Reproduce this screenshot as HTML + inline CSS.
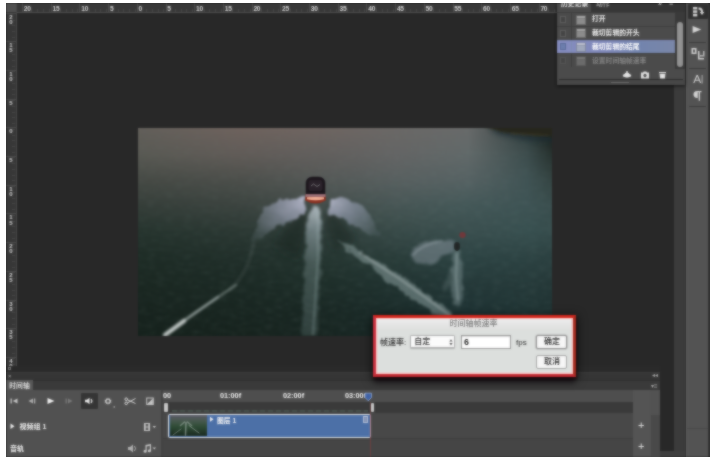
<!DOCTYPE html>
<html lang="zh-CN">
<head>
<meta charset="utf-8">
<title>时间轴帧速率</title>
<style>
*{box-sizing:border-box;margin:0;padding:0}
html,body{width:710px;height:459px;overflow:hidden;background:#fff}
body{position:relative;font-family:"Liberation Sans","Noto Sans CJK SC",sans-serif;font-size:8px;color:#ddd;line-height:1}
.a{position:absolute}
#clipper{left:0;top:0;width:710px;height:459px;overflow:hidden;clip-path:inset(3px 0 2px 6px)}
#app{left:-10px;top:-10px;width:740px;height:480px;background:#282828;filter:url(#soft)}
#in{left:10px;top:10px;width:710px;height:459px}
#rt{left:6px;top:3px;width:551px;height:10px;background:#373737 repeating-linear-gradient(90deg,transparent 0,transparent 4.74px,#474747 4.74px,#474747 5.74px) 15.3px 6px/600px 3px no-repeat;border-bottom:1px solid #4e4e4e}
#rl{left:6px;top:3px;width:10.5px;height:368px;background:#373737 repeating-linear-gradient(180deg,transparent 0,transparent 4.74px,#474747 4.74px,#474747 5.74px) 6px 12px/3px 400px no-repeat;border-right:1px solid #4a4a4a}
#rc{left:6px;top:3px;width:10px;height:9px;background:#4f4f4f}
.rn{font-size:6.6px;color:#d8d8d8;top:4.6px;height:7px;line-height:7px;white-space:nowrap;font-weight:700;letter-spacing:-.2px}
.rv{font-size:6px;color:#d8d8d8;left:7px;width:8px;line-height:5.3px;text-align:center;font-weight:700}
.tk{top:3px;width:1px;height:9px;background:#4c4c4c}
.tkv{left:6px;height:1px;width:10px;background:#4c4c4c}
#photo{left:138px;top:128px;width:414px;height:208px;overflow:hidden}
#photo svg{display:block}
</style>
</head>
<body>
<svg width="0" height="0" style="position:absolute"><defs><filter id="soft" x="0" y="0" width="100%" height="100%" color-interpolation-filters="sRGB"><feGaussianBlur stdDeviation="0.8" result="b"/><feComposite in="SourceGraphic" in2="b" operator="arithmetic" k1="0" k2="0.3" k3="0.7" k4="0"/></filter></defs></svg>
<div id="clipper" class="a"><div id="app" class="a"><div id="in" class="a">
<div id="rt" class="a"></div>
<div id="rl" class="a"></div>
<div id="rc" class="a"></div>
<div class="a tk" style="left:22.0px"></div><div class="a rn" style="left:23.8px">20</div>
<div class="a tk" style="left:50.7px"></div><div class="a rn" style="left:52.5px">15</div>
<div class="a tk" style="left:79.4px"></div><div class="a rn" style="left:81.2px">10</div>
<div class="a tk" style="left:108.1px"></div><div class="a rn" style="left:109.9px">5</div>
<div class="a tk" style="left:136.8px"></div><div class="a rn" style="left:138.6px">0</div>
<div class="a tk" style="left:165.5px"></div><div class="a rn" style="left:167.3px">5</div>
<div class="a tk" style="left:194.2px"></div><div class="a rn" style="left:196.0px">10</div>
<div class="a tk" style="left:222.9px"></div><div class="a rn" style="left:224.7px">15</div>
<div class="a tk" style="left:251.6px"></div><div class="a rn" style="left:253.4px">20</div>
<div class="a tk" style="left:280.3px"></div><div class="a rn" style="left:282.1px">25</div>
<div class="a tk" style="left:309.0px"></div><div class="a rn" style="left:310.8px">30</div>
<div class="a tk" style="left:337.7px"></div><div class="a rn" style="left:339.5px">35</div>
<div class="a tk" style="left:366.4px"></div><div class="a rn" style="left:368.2px">40</div>
<div class="a tk" style="left:395.1px"></div><div class="a rn" style="left:396.9px">45</div>
<div class="a tk" style="left:423.8px"></div><div class="a rn" style="left:425.6px">50</div>
<div class="a tk" style="left:452.5px"></div><div class="a rn" style="left:454.3px">55</div>
<div class="a tk" style="left:481.2px"></div><div class="a rn" style="left:483.0px">60</div>
<div class="a tk" style="left:509.9px"></div><div class="a rn" style="left:511.7px">65</div>
<div class="a tk" style="left:538.6px"></div><div class="a rn" style="left:540.4px">70</div>
<div class="a tkv" style="top:12.5px"></div><div class="a rv" style="top:14.5px">2<br>0</div>
<div class="a tkv" style="top:41.2px"></div><div class="a rv" style="top:43.2px">1<br>5</div>
<div class="a tkv" style="top:69.9px"></div><div class="a rv" style="top:71.9px">1<br>0</div>
<div class="a tkv" style="top:98.6px"></div><div class="a rv" style="top:100.6px">5</div>
<div class="a tkv" style="top:127.3px"></div><div class="a rv" style="top:129.3px">0</div>
<div class="a tkv" style="top:156.0px"></div><div class="a rv" style="top:158.0px">5</div>
<div class="a tkv" style="top:184.7px"></div><div class="a rv" style="top:186.7px">1<br>0</div>
<div class="a tkv" style="top:213.4px"></div><div class="a rv" style="top:215.4px">1<br>5</div>
<div class="a tkv" style="top:242.1px"></div><div class="a rv" style="top:244.1px">2<br>0</div>
<div class="a tkv" style="top:270.8px"></div><div class="a rv" style="top:272.8px">2<br>5</div>
<div class="a tkv" style="top:299.5px"></div><div class="a rv" style="top:301.5px">3<br>0</div>
<div class="a tkv" style="top:328.2px"></div><div class="a rv" style="top:330.2px">3<br>5</div>
<div class="a tkv" style="top:356.9px"></div><div class="a rv" style="top:358.9px">4<br>0</div>
<div id="photo" class="a"><svg width="414" height="208" viewBox="0 0 414 208">
<defs>
<linearGradient id="c0" x1="0" y1="0" x2="0" y2="208" gradientUnits="userSpaceOnUse"><stop offset="0.000" stop-color="#625f5a"/><stop offset="0.125" stop-color="#595a54"/><stop offset="0.250" stop-color="#464a45"/><stop offset="0.375" stop-color="#353e39"/><stop offset="0.500" stop-color="#26342e"/><stop offset="0.625" stop-color="#1e2c26"/><stop offset="0.750" stop-color="#1b2822"/><stop offset="0.875" stop-color="#18241f"/><stop offset="1.000" stop-color="#16221d"/></linearGradient>
<linearGradient id="c1" x1="0" y1="0" x2="0" y2="208" gradientUnits="userSpaceOnUse"><stop offset="0.000" stop-color="#6e625d"/><stop offset="0.125" stop-color="#615c58"/><stop offset="0.250" stop-color="#4c4f4b"/><stop offset="0.375" stop-color="#3b433f"/><stop offset="0.500" stop-color="#2b3833"/><stop offset="0.625" stop-color="#212f2a"/><stop offset="0.750" stop-color="#1c2a25"/><stop offset="0.875" stop-color="#192621"/><stop offset="1.000" stop-color="#17231e"/></linearGradient>
<linearGradient id="c2" x1="0" y1="0" x2="0" y2="208" gradientUnits="userSpaceOnUse"><stop offset="0.000" stop-color="#6f6561"/><stop offset="0.125" stop-color="#625f5d"/><stop offset="0.250" stop-color="#545856"/><stop offset="0.375" stop-color="#434d4a"/><stop offset="0.500" stop-color="#313f3b"/><stop offset="0.625" stop-color="#253530"/><stop offset="0.750" stop-color="#1e2e29"/><stop offset="0.875" stop-color="#1a2824"/><stop offset="1.000" stop-color="#182521"/></linearGradient>
<linearGradient id="c3" x1="0" y1="0" x2="0" y2="208" gradientUnits="userSpaceOnUse"><stop offset="0.000" stop-color="#6a6866"/><stop offset="0.125" stop-color="#646565"/><stop offset="0.250" stop-color="#586060"/><stop offset="0.375" stop-color="#475655"/><stop offset="0.500" stop-color="#384a48"/><stop offset="0.625" stop-color="#2a3d3a"/><stop offset="0.750" stop-color="#213331"/><stop offset="0.875" stop-color="#1c2d2b"/><stop offset="1.000" stop-color="#192927"/></linearGradient>
<linearGradient id="c4" x1="0" y1="0" x2="0" y2="208" gradientUnits="userSpaceOnUse"><stop offset="0.000" stop-color="#686a6a"/><stop offset="0.125" stop-color="#616969"/><stop offset="0.250" stop-color="#566263"/><stop offset="0.375" stop-color="#445858"/><stop offset="0.500" stop-color="#3a4e4e"/><stop offset="0.625" stop-color="#2d4343"/><stop offset="0.750" stop-color="#253939"/><stop offset="0.875" stop-color="#1f3334"/><stop offset="1.000" stop-color="#1c2e2f"/></linearGradient>
<linearGradient id="c5" x1="0" y1="0" x2="0" y2="208" gradientUnits="userSpaceOnUse"><stop offset="0.000" stop-color="#303c3c"/><stop offset="0.125" stop-color="#3c4c4c"/><stop offset="0.250" stop-color="#405354"/><stop offset="0.375" stop-color="#3e5354"/><stop offset="0.500" stop-color="#385050"/><stop offset="0.625" stop-color="#2d4343"/><stop offset="0.750" stop-color="#263a3a"/><stop offset="0.875" stop-color="#213535"/><stop offset="1.000" stop-color="#1e3131"/></linearGradient>
<linearGradient id="c6" x1="0" y1="0" x2="0" y2="208" gradientUnits="userSpaceOnUse"><stop offset="0.000" stop-color="#1a201c"/><stop offset="0.125" stop-color="#27322f"/><stop offset="0.250" stop-color="#344442"/><stop offset="0.375" stop-color="#3a4e4e"/><stop offset="0.500" stop-color="#364c4c"/><stop offset="0.625" stop-color="#2b4040"/><stop offset="0.750" stop-color="#253838"/><stop offset="0.875" stop-color="#203333"/><stop offset="1.000" stop-color="#1d2f2f"/></linearGradient>
<linearGradient id="r1" x1="0" y1="0" x2="100" y2="0" gradientUnits="userSpaceOnUse"><stop offset="0" stop-color="#000"/><stop offset="1" stop-color="#fff"/></linearGradient><mask id="m1" maskUnits="userSpaceOnUse" x="0" y="0" width="414" height="208"><rect x="0" y="0" width="414" height="208" fill="url(#r1)"/></mask>
<linearGradient id="r2" x1="100" y1="0" x2="180" y2="0" gradientUnits="userSpaceOnUse"><stop offset="0" stop-color="#000"/><stop offset="1" stop-color="#fff"/></linearGradient><mask id="m2" maskUnits="userSpaceOnUse" x="0" y="0" width="414" height="208"><rect x="100" y="0" width="314" height="208" fill="url(#r2)"/></mask>
<linearGradient id="r3" x1="180" y1="0" x2="260" y2="0" gradientUnits="userSpaceOnUse"><stop offset="0" stop-color="#000"/><stop offset="1" stop-color="#fff"/></linearGradient><mask id="m3" maskUnits="userSpaceOnUse" x="0" y="0" width="414" height="208"><rect x="180" y="0" width="234" height="208" fill="url(#r3)"/></mask>
<linearGradient id="r4" x1="260" y1="0" x2="330" y2="0" gradientUnits="userSpaceOnUse"><stop offset="0" stop-color="#000"/><stop offset="1" stop-color="#fff"/></linearGradient><mask id="m4" maskUnits="userSpaceOnUse" x="0" y="0" width="414" height="208"><rect x="260" y="0" width="154" height="208" fill="url(#r4)"/></mask>
<linearGradient id="r5" x1="330" y1="0" x2="390" y2="0" gradientUnits="userSpaceOnUse"><stop offset="0" stop-color="#000"/><stop offset="1" stop-color="#fff"/></linearGradient><mask id="m5" maskUnits="userSpaceOnUse" x="0" y="0" width="414" height="208"><rect x="330" y="0" width="84" height="208" fill="url(#r5)"/></mask>
<linearGradient id="r6" x1="390" y1="0" x2="414" y2="0" gradientUnits="userSpaceOnUse"><stop offset="0" stop-color="#000"/><stop offset="1" stop-color="#fff"/></linearGradient><mask id="m6" maskUnits="userSpaceOnUse" x="0" y="0" width="414" height="208"><rect x="390" y="0" width="24" height="208" fill="url(#r6)"/></mask>
<linearGradient id="tr" x1="0" y1="78" x2="0" y2="208" gradientUnits="userSpaceOnUse">
<stop offset="0" stop-color="#d0dae2" stop-opacity=".75"/>
<stop offset=".2" stop-color="#a8b8c0" stop-opacity=".52"/>
<stop offset=".45" stop-color="#8ea2a4" stop-opacity=".32"/>
<stop offset="1" stop-color="#86a0a0" stop-opacity=".22"/>
</linearGradient>
<radialGradient id="fl" cx="166" cy="72" r="62" gradientUnits="userSpaceOnUse">
<stop offset="0" stop-color="#c4c6dc" stop-opacity=".85"/>
<stop offset=".45" stop-color="#a0a6bc" stop-opacity=".6"/>
<stop offset="1" stop-color="#8c9aa6" stop-opacity=".14"/>
</radialGradient>
<radialGradient id="fr" cx="192" cy="72" r="60" gradientUnits="userSpaceOnUse">
<stop offset="0" stop-color="#c4c6dc" stop-opacity=".8"/>
<stop offset=".45" stop-color="#9ca4ba" stop-opacity=".55"/>
<stop offset="1" stop-color="#8896a2" stop-opacity=".12"/>
</radialGradient>
<filter id="b1" x="-30%" y="-30%" width="160%" height="160%"><feGaussianBlur stdDeviation="1"/></filter>
<filter id="b2" x="-30%" y="-30%" width="160%" height="160%"><feGaussianBlur stdDeviation="2"/></filter>
<filter id="b3" x="-30%" y="-30%" width="160%" height="160%"><feGaussianBlur stdDeviation="0.7"/></filter>
<filter id="b4" x="-30%" y="-30%" width="160%" height="160%"><feGaussianBlur stdDeviation="4"/></filter>
<filter id="rg" x="-30%" y="-30%" width="160%" height="160%" color-interpolation-filters="sRGB">
<feTurbulence type="fractalNoise" baseFrequency="0.09" numOctaves="3" seed="7" result="n"/>
<feDisplacementMap in="SourceGraphic" in2="n" scale="9" xChannelSelector="R" yChannelSelector="G" result="d"/>
<feGaussianBlur in="d" stdDeviation="1.3"/>
</filter>
<filter id="rg2" x="-30%" y="-30%" width="160%" height="160%" color-interpolation-filters="sRGB">
<feTurbulence type="fractalNoise" baseFrequency="0.12" numOctaves="2" seed="11" result="n"/>
<feDisplacementMap in="SourceGraphic" in2="n" scale="6" xChannelSelector="R" yChannelSelector="G" result="d"/>
<feGaussianBlur in="d" stdDeviation="1.8"/>
</filter>
<filter id="nz" x="0" y="0" width="100%" height="100%" color-interpolation-filters="sRGB">
<feTurbulence type="fractalNoise" baseFrequency="0.11 0.34" numOctaves="3" seed="3"/>
<feColorMatrix type="matrix" values="0 0 0 0 .75  0 0 0 0 .85  0 0 0 0 .82  1.6 0 0 0 -.72"/>
<feGaussianBlur stdDeviation=".8"/>
</filter>
<linearGradient id="nzg" x1="0" y1="0" x2="0" y2="1"><stop offset="0" stop-color="#fff" stop-opacity=".15"/><stop offset=".35" stop-color="#fff" stop-opacity=".6"/><stop offset="1" stop-color="#fff" stop-opacity="1"/></linearGradient>
<mask id="nzm" maskUnits="userSpaceOnUse" x="0" y="0" width="414" height="208"><rect width="414" height="208" fill="url(#nzg)"/></mask>
</defs>
<rect width="414" height="208" fill="url(#c0)"/>
<rect width="414" height="208" fill="url(#c1)" mask="url(#m1)"/>
<rect width="414" height="208" fill="url(#c2)" mask="url(#m2)"/>
<rect width="414" height="208" fill="url(#c3)" mask="url(#m3)"/>
<rect width="414" height="208" fill="url(#c4)" mask="url(#m4)"/>
<rect width="414" height="208" fill="url(#c5)" mask="url(#m5)"/>
<rect width="414" height="208" fill="url(#c6)" mask="url(#m6)"/>
<!-- ripple texture -->
<g mask="url(#nzm)" opacity=".11"><rect width="414" height="208" filter="url(#nz)"/></g>
<!-- land -->
<path d="M350 1 L416 3 L416 15 L385 12 L360 7 Z" fill="#1c2c30" opacity=".6" filter="url(#b2)"/>
<path d="M344 -2 L416 -2 L416 8.500 L392 7 L364 4 Z" fill="#25261a" filter="url(#b1)"/>
<path d="M372 5.500 L410 7.500" stroke="#5a4a28" stroke-width="1.200" opacity=".6" filter="url(#b1)"/>
<!-- shadow under wake dome -->
<path d="M162 78 L136 118 L160 132 L172 92 Z M194 78 L218 112 L196 122 L186 92 Z" fill="#14211f" opacity=".5" filter="url(#b4)"/>
<!-- centre trail -->
<path d="M174 78 L182 78 L183.500 100 L182.500 150 L178.500 208 L163.500 208 L166 150 L168 100 Z" fill="url(#tr)" filter="url(#rg2)"/>
<!-- wake fans -->
<g filter="url(#rg)">
<path d="M168 69 L152 69 L132 77 L119 92 L113 112 L124 110 L138 100 L152 93 L166 86 Z" fill="url(#fl)"/>
<path d="M190 69 L206 69 L224 77 L236 92 L241 110 L230 106 L216 96 L202 90 L192 86 Z" fill="url(#fr)"/>

<!-- right diagonal -->
<path d="M200 111.500 L232 128.500 L262 148 L298 173 L318 188 L306 191 L280 176 L256 158 L229 137 L200 113.500 Z" fill="#9cb0b0" opacity=".46"/>
</g>
<!-- jet ski spray + trail -->
<g filter="url(#rg2)">
<path d="M272 126 L282 116 L300 111 L317 114 L315 124 L307 128 L299 134 L289 138 L278 135 Z" fill="#b0b8c4" opacity=".36"/>
<path d="M316 122 L322 122 L324.500 140 L325 160 L323 178 L315 178 L313 160 L314 140 Z" fill="#9eb2b4" opacity=".36"/>
<path d="M314 138 L304 160 L308 163 L316 148 Z" fill="#9eb2b4" opacity=".18"/>
</g>
<g filter="url(#b1)" fill="none" stroke-linecap="round">
<path d="M275 127 Q284 116 304 113" stroke="#d0d6de" stroke-width="2" opacity=".25"/>
<path d="M319 126 L318 150 L320 172" stroke="#c0d0d0" stroke-width="2.200" opacity=".3"/>
</g>
<g filter="url(#b1)" stroke-linecap="round" fill="none">
<path d="M180 84 L180 130 L175 206" stroke="#c0d0d0" stroke-width="2.500" opacity=".2"/>
<!-- left diagonal -->
<path d="M28 206 L58 184 L98 157" stroke="#9aa8a4" stroke-width="2.600" opacity=".5"/>
<path d="M92 161 Q110 146 116 114" stroke="#9aa8a8" stroke-width="4" opacity=".1"/>
<path d="M27 207 L46 193" stroke="#e0e6e4" stroke-width="4.500" opacity=".75"/>
<path d="M46 193 L80 169" stroke="#c0cac8" stroke-width="2.500" opacity=".5"/>
<path d="M222 125 L262 151 L298 177 L312 188" stroke="#d4dede" stroke-width="2.500" opacity=".32"/>
</g>
<!-- boat -->
<g filter="url(#b3)">
<path d="M167.500 67 L167.500 56 Q167.500 48.500 175 48.500 L180 48.500 Q187.500 48.500 187.500 56 L187.500 67 Z" fill="#1a181c" stroke="#5c5c5c" stroke-width=".6" stroke-opacity=".6"/>
<rect x="170.500" y="52" width="14" height="11" rx="2.500" fill="#2c242a"/>
<path d="M173 58 l2.500 -2 l3.500 2.500 l3 -2" stroke="#8a8a90" stroke-width=".9" fill="none" opacity=".8"/>
<path d="M167.500 66.500 L187.500 66.500 L187.800 72.500 Q177.500 78.500 167.200 72.500 Z" fill="#8a3022"/>
<path d="M167.500 66.200 L187.500 66.200 L187.500 68.800 L167.500 68.800 Z" fill="#9c747c"/>
<path d="M169 69.300 Q177.500 68.600 186 69.300 L186 71.200 Q177.500 73.400 169 71.200 Z" fill="#f2b096"/>
<ellipse cx="324.500" cy="107" rx="3.200" ry="3" fill="#70383a"/>
<ellipse cx="319" cy="118.500" rx="3" ry="4.400" fill="#222828"/>
</g>
</svg></div>
<style>
/* right gutter + side column */
#gut{left:674px;top:3px;width:11px;height:454px;background:#3b3b3b}
#gl{left:685px;top:3px;width:1px;height:454px;background:#2e2e2e}
#side{left:686px;top:3px;width:22px;height:454px;background:#535353;border-left:1px solid #5e5e5e}
#sedge{left:708px;top:3px;width:2px;height:454px;background:#343434}
.sep{left:689px;width:17px;height:1px;background:#3c3c3c}
#sb1{left:688px;top:3.5px;width:19.5px;height:15.5px;background:#303030;border-radius:1px}
/* history */
#hist{left:557px;top:3px;width:128px;height:82px;background:#4b4b4b;box-shadow:0 1px 3px rgba(0,0,0,.7)}
#htab{left:0;top:0;width:128px;height:9px;background:#363636}
#htab1{left:0;top:0;width:34px;height:9px;background:#4b4b4b}
.ht{font-size:6.8px;color:#e0e0e0;top:-4.2px;line-height:10px;white-space:nowrap;font-weight:700}
.hr{left:0;width:118px;height:13.8px;border-top:1px solid #3e3e3e}
.hr .cb{left:3px;top:2.8px;width:6px;height:7px;border:1px solid #5e5e5e;background:#444}
.hr .vl{left:13.5px;top:0;width:1px;height:13px;background:#3e3e3e}
.hr .tx{left:35px;top:.2px;font-size:6.8px;line-height:11px;color:#f2f2f2;white-space:nowrap;font-weight:700}
.hr svg{left:18px;top:.6px}
#hsel{background:linear-gradient(90deg,#868dbf 0,#7f88ba 40%,#7284ad 70%,#7a87a8 100%);border-top-color:#7a84b0}
#hscr{left:118px;top:9px;width:10px;height:60px;background:#3a3a3a}
#hth{left:119.5px;top:19px;width:6px;height:45px;border-radius:3px;background:#929292}
#hfoot{left:0;top:66px;width:128px;height:11px;background:#4b4b4b}
#hline{left:2px;top:76px;width:124px;height:1px;background:#2c2c2c}
#hbot{left:0;top:77px;width:128px;height:5px;background:#474747}
/* status strips above timeline */
#hs{left:6px;top:366px;width:654px;height:6px;background:#2a2a2a}
#st{left:6px;top:371.5px;width:654px;height:8.5px;background:#353535;border-top:1px solid #3c3c3c}
#tabrow{left:6px;top:379.5px;width:654px;height:10.5px;background:#3a3a3a;border-top:1px solid #2f2f2f}
#tab{left:6px;top:380px;width:27px;height:10px;background:#575757;font-size:6.8px;line-height:12px;color:#f0f0f0;text-align:center;white-space:nowrap;font-weight:500}
#tl{left:6px;top:390px;width:654px;height:67px;background:#515151}
#tlr{left:163px;top:390px;width:470px;height:12px;background:#4e4e4e}
#tlw{left:163px;top:402px;width:470px;height:11px;background:#3a3a3a}
#tlt1{left:163px;top:413px;width:470px;height:26px;background:#484848;border-bottom:1px solid #3e3e3e}
#tlt2{left:163px;top:439px;width:470px;height:18px;background:#454545}
#tldv{left:161px;top:390px;width:2px;height:67px;background:#434343}
#plus{left:633px;top:390px;width:17px;height:67px;background:#545454}
#tscr{left:650px;top:390px;width:10px;height:67px;background:#525252}
#tsth{left:650.5px;top:414.5px;width:9.5px;height:43px;background:#494949}
.tm{font-size:7.3px;color:#f0f0f0;top:390.6px;line-height:9px;white-space:nowrap;font-weight:700}
#clip{left:168px;top:413.6px;width:202.6px;height:24px;background:#4c70a7;border:1.2px solid #e2e7ea;border-radius:1.5px}
#thumb{left:.5px;top:.5px;width:37.5px;height:20.5px;background:linear-gradient(180deg,#5a5a66 0,#46584c 30%,#2f4c36 55%,#1a2a20 100%);overflow:hidden}
#cname{left:42px;top:1.2px;font-size:6.8px;line-height:9px;color:#f4f4f4;white-space:nowrap;font-weight:700}
#ph{left:369.5px;top:402px;width:1.6px;height:55px;background:linear-gradient(rgba(170,70,70,.3) 0,rgba(170,70,70,.3) 12px,rgba(150,50,60,.6) 13px,rgba(150,60,60,.45) 100%)}
.lbl{font-size:7.5px;line-height:10px;color:#f2f2f2;white-space:nowrap;font-weight:700}
#spk{left:81px;top:393px;width:17px;height:16px;background:#353535;border-radius:1px}
/* dialog */
#dsh{left:373px;top:317px;width:203.5px;height:62px;background:rgba(50,0,0,.6);filter:blur(1.2px)}
#dlg{left:373px;top:315px;width:203px;height:62.2px;background:#dcdfdd;border:3px solid #c42a30;border-width:3px 3.5px 3.6px 3.5px;border-color:#d2261c #a42c20 #c02830 #c8303e;box-shadow:inset 0 0 1.5px 1.2px #ffc4c4,0 6px 5px -1px rgba(10,0,8,.6),0 2px 9px 2px rgba(0,0,0,.45)}
#dtb{left:1px;top:1px;width:194px;height:11px;background:linear-gradient(#ececec,#dedfde)}
#dtt{left:-1px;top:0;width:197px;text-align:center;font-size:8px;line-height:11px;color:#7c7c7c;letter-spacing:0;font-weight:500}
.dk{color:#2c2c2c;font-size:8px;line-height:10px;white-space:nowrap;font-weight:500}
#sel{left:33.8px;top:17.2px;width:45.2px;height:13.3px;background:#fbfbfb;border:1px solid #adadad;border-radius:1.5px;box-shadow:0 .5px 1px rgba(0,0,0,.2)}
#inp{left:84.8px;top:17.2px;width:50px;height:14.3px;background:#fff;border:1px solid #979797;box-shadow:inset 0 1px 1px rgba(0,0,0,.15)}
.btn{left:160.3px;width:31.2px;height:14.2px;background:#f6f6f6;border:1px solid #a4a4a4;border-radius:2px;text-align:center;font-size:8px;line-height:11.5px;color:#2a2a2a;font-weight:500}
</style>
<div id="gut" class="a"></div><div id="gl" class="a"></div>
<div id="side" class="a"></div><div id="sedge" class="a"></div>
<div id="sb1" class="a"></div>
<div class="a sep" style="top:42px"></div><div class="a sep" style="top:68px"></div><div class="a sep" style="top:106px"></div>
<svg class="a" style="left:686px;top:3px" width="22" height="110" viewBox="0 0 22 110">
 <g fill="#d4d4d4" stroke="none">
  <rect x="7" y="4" width="4.3" height="2.4"/><rect x="7" y="7.4" width="4.3" height="2.4"/><rect x="7" y="10.8" width="4.3" height="2.6"/>
  <path d="M12.5 4.5 q4.5 -.5 4.5 4.5 l1.3 0 l-2.3 3 l-2.3 -3 l1.3 0 q0 -2.5 -2.5 -2.5 z"/>
  <path d="M6.600 23 L15.400 26.500 L6.600 30 Z"/>
  <path d="M5.500 45 h5 v6 h-5 z M7 46.500 v3 h2 v-3 z" fill-rule="evenodd"/>
  <path d="M12 48 h1.500 v7 h4.500 v1.500 h-6 z"/>
  <path d="M14 52 l3 0 l0 -4 l1.500 0 l0 5.500 l-4.500 0 z" opacity=".8"/>
  <g transform="translate(11.2 80) scale(.84 .8) translate(-11.75 -80)"><path d="M7 80 L11 70 L12.500 70 L16.500 80 L15 80 L14 77.300 L9.500 77.300 L8.500 80 Z M10 76 L13.500 76 L11.750 71.500 Z" fill-rule="evenodd"/></g><rect x="15.6" y="72" width="1" height="8.5" opacity=".75"/>
  <path d="M7.500 91.500 a3.500 3.500 0 0 1 3.500 -3.500 h4.500 v1.300 h-1.500 v8.500 h-1.300 v-8.500 h-1 v5.700 a3.500 3.500 0 0 1 -4.200 -3.500 z"/>
 </g>
</svg>

<div id="hist" class="a">
 <div id="htab" class="a"></div><div id="htab1" class="a"></div>
 <div class="a ht" style="left:4px">历史记录</div><div class="a ht" style="left:39px;color:#a0a0a0">动作</div>
 <div class="a ht" style="left:101px;font-size:7px;color:#ccc">»</div><div class="a ht" style="left:112px;font-size:7px;color:#ccc">≡</div>
 <div class="a hr" style="top:9px"><div class="a cb"></div><div class="a vl"></div>
  <svg class="a" width="12" height="12" viewBox="0 0 12 12"><rect x="1" y="1.500" width="10" height="9.500" fill="#6e6e6e"/><rect x="2" y="4.500" width="8" height="5.500" fill="#8c8c8c"/><rect x="2" y="2.300" width="8" height="1.400" fill="#bdbdbd"/></svg>
  <div class="a tx">打开</div></div>
 <div class="a hr" style="top:22.800px"><div class="a cb"></div><div class="a vl"></div>
  <svg class="a" width="12" height="12" viewBox="0 0 12 12"><rect x="1" y="1.500" width="10" height="9.500" fill="#6e6e6e"/><rect x="2" y="4.500" width="8" height="5.500" fill="#8c8c8c"/><rect x="2" y="2.300" width="8" height="1.400" fill="#bdbdbd"/></svg>
  <div class="a tx">裁切剪辑的开头</div></div>
 <div class="a hr" id="hsel" style="top:36.600px"><div class="a cb" style="background:#6d7fae;border-color:#5a6a98"></div><div class="a vl" style="background:#7e8db5"></div>
  <svg class="a" width="12" height="12" viewBox="0 0 12 12"><rect x="1" y="1.500" width="10" height="9.500" fill="#8088a0"/><rect x="2" y="4.500" width="8" height="5.500" fill="#a0a8bc"/><rect x="2" y="2.300" width="8" height="1.400" fill="#d8d8e0"/></svg>
  <div class="a tx" style="color:#fff">裁切剪辑的结尾</div></div>
 <div class="a hr" style="top:50.400px"><div class="a cb" style="opacity:.6"></div><div class="a vl"></div>
  <svg class="a" width="12" height="12" viewBox="0 0 12 12" style="opacity:.5"><rect x="1" y="1.500" width="10" height="9.500" fill="#6e6e6e"/><rect x="2" y="4.500" width="8" height="5.500" fill="#8c8c8c"/><rect x="2" y="2.300" width="8" height="1.400" fill="#bdbdbd"/></svg>
  <div class="a tx" style="color:#858585">设置时间轴帧速率</div></div>
 <div id="hscr" class="a"></div><div id="hth" class="a"></div>
 <div id="hfoot" class="a"></div>
 <svg class="a" style="left:62px;top:66px" width="56" height="11" viewBox="0 0 56 11">
  <g fill="#e4e4e4">
   <circle cx="8" cy="6" r="2.600"/><circle cx="5.500" cy="6.500" r="1.600"/><circle cx="10.500" cy="6.500" r="1.600"/><rect x="7.300" y="2" width="1.400" height="3"/>
   <path d="M22 3.500 h2 l.8 -1 h2.400 l.8 1 h2 v6 h-8 z M26 4.800 a1.700 1.700 0 1 0 .01 0 z" fill-rule="evenodd"/>
   <path d="M40 3 h7 v1.200 h-7 z M40.600 5 h5.800 l-.5 4.500 h-4.800 z"/>
  </g>
 </svg>
 <div id="hline" class="a"></div><div id="hbot" class="a"></div>
 <div class="a" style="left:54px;top:79px;width:18px;height:1px;background:#6a6a6a"></div>
</div>

<div class="a" style="left:660px;top:451px;width:25px;height:6px;background:#3e3e3e"></div>
<div class="a" style="left:687px;top:428px;width:21px;height:1px;background:#484848"></div>
<div id="hs" class="a"></div>
<div id="st" class="a"></div>
<div class="a" style="left:8px;top:373px;font-size:6px;line-height:7px;color:#aaa">×</div>
<div class="a" style="left:8px;top:367px;width:3px;height:3px;border:1px solid #777"></div>
<div id="tabrow" class="a"></div>
<div id="tab" class="a">时间轴</div>
<div id="tl" class="a"></div>
<div id="tlr" class="a"></div><div id="tlw" class="a"></div><div id="tlt1" class="a"></div><div id="tlt2" class="a"></div>
<div id="tldv" class="a"></div>
<div id="plus" class="a"></div><div id="tscr" class="a"></div><div id="tsth" class="a"></div>
<div id="spk" class="a"></div>
<svg class="a" style="left:6px;top:390px" width="160" height="67" viewBox="0 0 160 67">
 <g fill="#c8c8c8">
  <!-- |< -->
  <rect x="4.500" y="8.500" width="1.300" height="5"/><path d="M11.500 8.500 L6.800 11 L11.500 13.500 Z"/>
  <!-- <| -->
  <path d="M27 8.500 L22.500 11 L27 13.500 Z" opacity=".8"/><rect x="28" y="8.500" width="1.300" height="5" opacity=".8"/>
  <!-- play -->
  <path d="M41.500 8 L48.500 11 L41.500 14 Z" fill="#f0f0f0"/>
  <!-- |> dim -->
  <g opacity=".35"><rect x="59.500" y="8.500" width="1.300" height="5"/><path d="M62 8.500 L66.500 11 L62 13.500 Z"/></g>
  <!-- speaker -->
  <path d="M79 9.800 h2 l2.500 -2 v6.400 l-2.500 -2 h-2 z" fill="#eee"/><path d="M85 9 q1.800 2 0 4" stroke="#eee" stroke-width="1.100" fill="none"/>
  <!-- gear -->
  <g transform="translate(102 11.200) scale(.74) translate(-102 -11.200)"><path d="M102 6.500 l.9 1.500 1.700 -.5 .4 1.700 1.700 .5 -.9 1.500 .9 1.500 -1.700 .5 -.4 1.700 -1.700 -.5 -.9 1.500 -.9 -1.500 -1.700 .5 -.4 -1.700 -1.700 -.5 .9 -1.500 -.9 -1.500 1.700 -.5 .4 -1.700 1.700 .5 z M102 9.300 a1.900 1.900 0 1 0 .01 0 z" fill-rule="evenodd"/></g>
  <rect x="107.500" y="16.200" width="1.500" height="1.500" opacity=".7"/>
  <!-- scissors -->
  <g stroke="#d6d6d6" stroke-width="1" fill="none"><path d="M121.500 9.800 L129.500 13.500"/><path d="M121.500 12.800 L129.500 8.500"/><circle cx="120.200" cy="9.200" r="1.300"/><circle cx="120.200" cy="13.300" r="1.300"/></g>
  <!-- transition -->
  <path d="M140.200 7.500 h7.600 v7.400 h-7.600 z M141.200 8.500 v5.400 h5.600 v-5.400 z" fill-rule="evenodd"/><path d="M146.800 8.500 v5.400 h-5.600 z"/>
  <!-- track 1 -->
  <path d="M4.500 33.500 L8.500 36.300 L4.500 39 Z" fill="#eee"/>
  <path d="M138 33 h6 v8 h-6 z M139.700 34 v2.500 h2.600 v-2.500 z M139.700 37.500 v2.500 h2.600 v-2.500 z" fill-rule="evenodd"/>
  <path d="M146.500 36 h3.600 l-1.800 2 z"/>
  <!-- track 2 -->
  <path d="M122 57 h2 l3 -2.500 v8 l-3 -2.500 h-2 z" opacity=".8"/><path d="M128.500 56 q2 2.500 0 5" stroke="#d0d0d0" stroke-width="1" fill="none" opacity=".8"/>
  <path d="M139.500 55 l5.500 -1 v7 a1.600 1.400 0 1 1 -1.200 -1.400 v-3.800 l-3.100 .6 v5 a1.600 1.400 0 1 1 -1.200 -1.400 z"/>
  <path d="M146.500 57.500 h3.600 l-1.800 2 z"/>
 </g>
</svg>
<div class="a lbl" style="left:19.500px;top:421.500px;font-size:7px">视频组 1</div>
<div class="a lbl" style="left:10px;top:444px;font-size:7px">音轨</div>
<div class="a tm" style="left:163px">00</div>
<div class="a tm" style="left:220px">01:00f</div>
<div class="a tm" style="left:283px">02:00f</div>
<div class="a tm" style="left:345px">03:00f</div>
<div class="a" style="left:164px;top:403px;width:4px;height:9px;background:#c8c8c8;border-radius:1px"></div>
<div class="a" style="left:371px;top:403px;width:3px;height:9px;background:#c8c8c8;border-radius:1px"></div>
<div class="a" style="left:172px;top:410px;width:196px;height:2px;background:repeating-linear-gradient(90deg,#5f7a6c 0 5px,rgba(95,122,108,.4) 5px 8px);opacity:.38"></div>
<div id="clip" class="a"><div id="thumb" class="a"><svg width="38" height="21" viewBox="0 0 38 21"><g stroke="#c8d4d0" fill="none" opacity=".5" stroke-linecap="round"><path d="M16 7.500 L15.500 20" stroke-width="1.400"/><path d="M14.500 7 L10.500 10.500 M17.500 7 L21.500 10.500" stroke-width="1.600" opacity=".8"/><path d="M19 10.500 L29 18" stroke-width="1"/><path d="M3 20 L11 14" stroke-width=".8"/></g></svg></div>
 <svg class="a" style="left:39px;top:.5px" width="8" height="9" viewBox="0 0 8 9"><path d="M2 1.700 L5.500 4.200 L2 6.700 Z" fill="#f0f0f0"/></svg>
 <div id="cname" class="a" style="left:48px">图层 1</div>
 <div class="a" style="right:1.500px;top:1.500px;width:5.500px;height:6.500px;border:1px solid #b4c0d6;background:#8292b4"></div>
</div>
<div id="ph" class="a"></div>
<svg class="a" style="left:364px;top:392px" width="10" height="10" viewBox="0 0 10 10"><path d="M1 1.200 h6.500 v4.300 l-3.250 3.300 l-3.250 -3.300 z" fill="#3f62a6" stroke="#9ab2dc" stroke-width=".7"/></svg>
<div class="a" style="left:638px;top:420px;font-size:11px;line-height:11px;color:#e0e0e0">+</div>
<div class="a" style="left:638px;top:441px;font-size:11px;line-height:11px;color:#e0e0e0">+</div>
<div class="a" style="left:652px;top:372px;font-size:6px;line-height:7px;color:#aaa">◂◂</div>
<div class="a" style="left:651px;top:382.500px;font-size:6px;line-height:7px;color:#aaa">▾≡</div>

<div id="dsh" class="a"></div>
<div id="dlg" class="a">
 <div id="dtb" class="a"></div>
 <div id="dtt" class="a">时间轴帧速率</div>
 <div class="a dk" style="left:4px;top:19.500px">帧速率:</div>
 <div id="sel" class="a"><div class="a dk" style="left:3.500px;top:1px">自定</div>
  <svg class="a" style="left:37.500px;top:1.800px" width="6" height="9" viewBox="0 0 6 9"><path d="M3 1.200 L4.600 3.500 H1.400 Z M3 7.400 L4.600 5.100 H1.400 Z" fill="#555"/></svg></div>
 <div id="inp" class="a"><div class="a dk" style="left:2.300px;top:1.300px;color:#1c1c1c;font-size:8.800px;font-weight:bold">6</div></div>
 <div class="a dk" style="left:140px;top:20px">fps</div>
 <div class="a btn" style="top:16.800px;border-color:#8e8e8e;box-shadow:0 0 0 .6px #b0b0b0">确定</div>
 <div class="a btn" style="top:36.800px">取消</div>
</div>
</div></div></div>
</body>
</html>
